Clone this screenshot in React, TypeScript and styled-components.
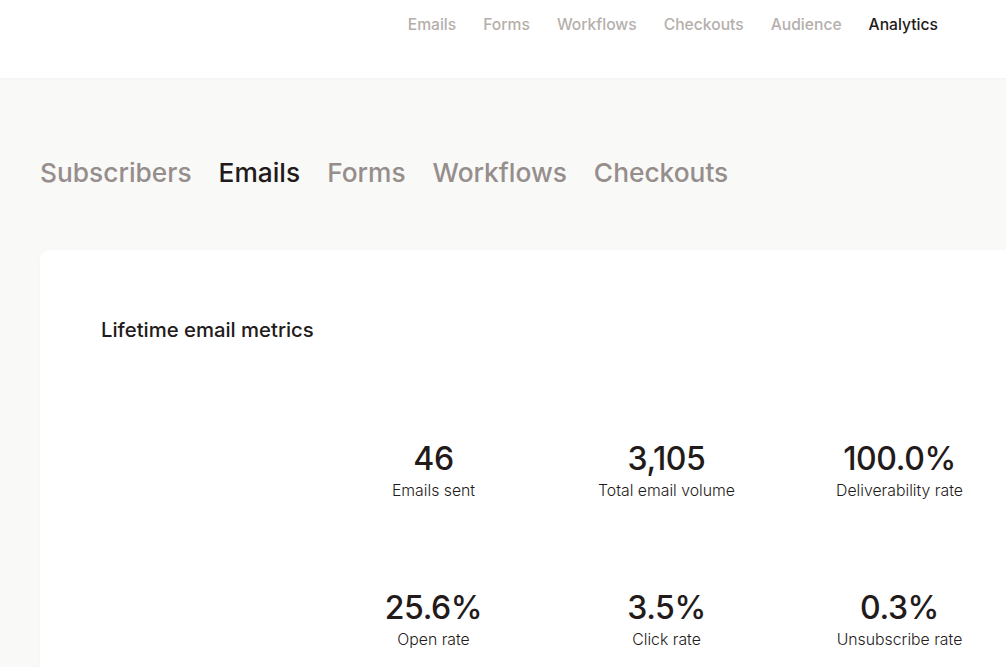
import React from 'react'
import styled, { createGlobalStyle } from 'styled-components'

const navLinks = ['Emails', 'Forms', 'Workflows', 'Checkouts', 'Audience', 'Analytics']
const tabs = ['Subscribers', 'Emails', 'Forms', 'Workflows', 'Checkouts']
const metrics = [
  { value: '46', label: 'Emails sent' },
  { value: '3,105', label: 'Total email volume' },
  { value: '100.0%', label: 'Deliverability rate' },
  { value: '25.6%', label: 'Open rate' },
  { value: '3.5%', label: 'Click rate' },
  { value: '0.3%', label: 'Unsubscribe rate' },
]

export default function App() {
  return (
    <>
      <GlobalStyle />
      <Header>
        <Nav>
          {navLinks.map((link) => (
            <NavLink key={link} $active={link === 'Analytics'}>
              {link}
            </NavLink>
          ))}
        </Nav>
      </Header>
      <Main>
        <Tabs>
          {tabs.map((tab) => (
            <Tab key={tab} $active={tab === 'Emails'}>
              {tab}
            </Tab>
          ))}
        </Tabs>
        <Card>
          <CardTitle>Lifetime email metrics</CardTitle>
          <MetricGrid>
            {metrics.map((metric) => (
              <Metric key={metric.label}>
                <MetricValue>{metric.value}</MetricValue>
                <MetricLabel>{metric.label}</MetricLabel>
              </Metric>
            ))}
          </MetricGrid>
        </Card>
      </Main>
    </>
  )
}

const GlobalStyle = createGlobalStyle`
  html,
  body {
    width: 1006px;
    height: 667px;
    margin: 0;
    overflow: hidden;
    font-family: Inter, "Liberation Sans", sans-serif;
    color: #231a1a;
    background: #f9f9f7;
  }
`

const Header = styled.header`
  display: flex;
  justify-content: flex-end;
  box-sizing: border-box;
  height: 78px;
  padding: 15px 68px 0 0;
  background: #fff;
  box-shadow: 0 1px 2px rgba(35, 26, 26, 0.03);
`

const Nav = styled.nav`
  display: flex;
  gap: 27px;
`

const NavLink = styled.a<{ $active?: boolean }>`
  font-size: 15.65px;
  font-weight: 500;
  line-height: 20px;
  color: ${(p) => (p.$active ? '#231a1a' : '#b5afac')};
`

const Main = styled.main`
  padding: 78px 0 0 40px;
`

const Tabs = styled.div`
  display: flex;
  gap: 27px;
`

const Tab = styled.a<{ $active?: boolean }>`
  font-size: 26.3px;
  font-weight: 500;
  line-height: 34px;
  color: ${(p) => (p.$active ? '#231a1a' : '#968e8c')};
`

const Card = styled.section`
  box-sizing: border-box;
  width: 1100px;
  height: 600px;
  margin-top: 60px;
  padding: 68px 0 0 61px;
  background: #fff;
  border-radius: 10px;
  box-shadow: 0 1px 3px rgba(35, 26, 26, 0.03);
`

const CardTitle = styled.h2`
  margin: 0;
  font-size: 20.3px;
  font-weight: 500;
  line-height: 24px;
  color: #231a1a;
`

const MetricGrid = styled.div`
  display: grid;
  grid-template-columns: repeat(3, 233px);
  row-gap: 85px;
  margin: 97px 0 0 216px;
`

const Metric = styled.div`
  display: flex;
  flex-direction: column;
  align-items: center;
`

const MetricValue = styled.div`
  font-size: 32px;
  font-weight: 550;
  line-height: 40px;
  letter-spacing: -0.4px;
  color: #231a1a;
`

const MetricLabel = styled.div`
  font-size: 15.8px;
  font-weight: 350;
  line-height: 24px;
  color: #231a1a;
`
